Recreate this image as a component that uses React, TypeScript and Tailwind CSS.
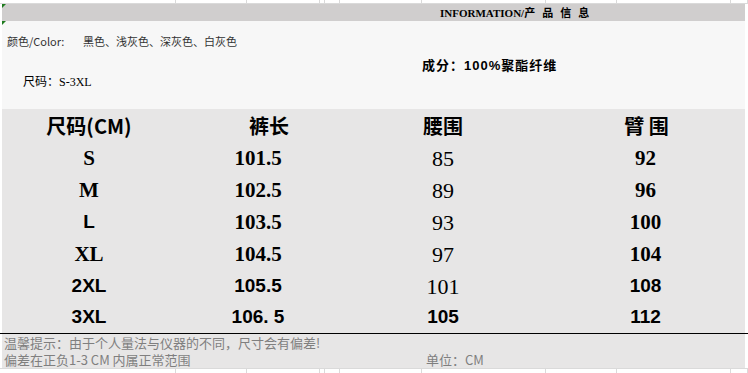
import React from "react";

const SERIF = "font-['Liberation_Serif',serif] font-bold text-[21px]";
const SERIF_REG = "font-['Liberation_Serif',serif] font-normal text-[22px]";
const SANS = "font-['Liberation_Sans',sans-serif] font-bold text-[19px]";
const CJK_HEAD = "font-['Noto_Sans_CJK_SC',sans-serif] font-bold text-[20px]";

// spreadsheet gridline ticks along the top and bottom edges
const GRID_CELLS = [176, 71, 73, 5, 15, 82, 124, 71, 114, 17];

const rows = [
  { size: ["S", SERIF], len: ["101.5", SERIF], waist: ["85", SERIF_REG], hip: ["92", SERIF] },
  { size: ["M", SERIF], len: ["102.5", SERIF], waist: ["89", SERIF_REG], hip: ["96", SERIF] },
  { size: ["L", SANS], len: ["103.5", SERIF], waist: ["93", SERIF_REG], hip: ["100", SERIF] },
  { size: ["XL", SERIF], len: ["104.5", SERIF], waist: ["97", SERIF_REG], hip: ["104", SERIF] },
  { size: ["2XL", SANS], len: ["105.5", SANS], waist: ["101", SERIF_REG], hip: ["108", SANS] },
  { size: ["3XL", SANS], len: ["106. 5", SANS], waist: ["105", SANS], hip: ["112", SANS] },
];

const GridStrip = ({ className }: { className: string }) => (
  <div className={`flex ${className}`}>
    {GRID_CELLS.map((w, i) => (
      <div
        key={i}
        style={{ width: w }}
        className="h-full shrink-0 border-r border-[#dadada]"
      />
    ))}
  </div>
);

const Corner = () => (
  <svg className="absolute left-0 top-0" width="4" height="4" viewBox="0 0 4 4">
    <polygon points="0,0 4,0 0,4" fill="#1e7b1e" />
  </svg>
);

const TABLE_COLS = "grid grid-cols-[174px_164px_206px_199px]";

export default function App() {
  return (
    <div className="w-[748px] h-[373px] bg-white overflow-hidden text-black">
      <GridStrip className="h-[4px] border-b border-[#dadada]" />

      {/* title bar */}
      <div className="relative ml-[2px] w-[743px] h-[17px] bg-[#d0cece] pl-[438px] text-[11px] leading-[17px] font-bold whitespace-pre">
        <Corner />
        <span className="font-['Liberation_Serif',serif]">INFORMATION/</span>
        <span className="font-['Noto_Sans_CJK_SC',sans-serif] tracking-[7px]">产品信息</span>
      </div>

      {/* info panel */}
      <div className="relative ml-[2px] w-[743px] h-[88px] bg-[#f7f7f7] flex">
        <Corner />
        <div className="w-[420px] pl-[5px] pt-[12px]">
          <div className="h-4 leading-4 text-[11px] text-[#333] font-['Noto_Sans_CJK_SC',sans-serif] whitespace-pre">
            <span className="inline-block w-[76px]">颜色/Color:</span>
            黑色、浅灰色、深灰色、白灰色
          </div>
          <div className="mt-[25px] pl-[16px] h-4 leading-4 text-[12px] font-['Liberation_Serif','Noto_Sans_CJK_SC',serif]">
            尺码：S-3XL
          </div>
        </div>
        <div className="pt-[37px] h-4 leading-4 text-[13px] font-bold tracking-[1px] font-['Liberation_Sans','Noto_Sans_CJK_SC',sans-serif]">
          成分：100%聚酯纤维
        </div>
      </div>

      {/* size table */}
      <div className="ml-[2px] w-[743px] h-[224px] bg-[#e7e6e6]">
        <div className={`${TABLE_COLS} h-[33px] items-center text-center`}>
          <div className={`${CJK_HEAD} whitespace-pre`}>尺码(CM)</div>
          <div className={`${CJK_HEAD} pl-[22px]`}>裤长</div>
          <div className={CJK_HEAD}>腰围</div>
          <div className={`${CJK_HEAD} whitespace-pre pl-[2px]`}>臂 围</div>
        </div>
        {rows.map((r, i) => (
          <div
            key={i}
            className={`${TABLE_COLS} ${i === rows.length - 1 ? "h-[31px]" : "h-8"} items-center text-center whitespace-pre`}
          >
            <div className={r.size[1]}>{r.size[0]}</div>
            <div className={r.len[1]}>{r.len[0]}</div>
            <div className={r.waist[1]}>{r.waist[0]}</div>
            <div className={r.hip[1]}>{r.hip[0]}</div>
          </div>
        ))}
      </div>

      <div className="h-px bg-black" />

      {/* footer notes */}
      <div className="ml-[2px] w-[743px] h-[34px] bg-[#e7e6e6] pl-[2px] text-[13px] leading-[17px] text-[#7f7f7f] font-['Noto_Sans_CJK_SC',sans-serif]">
        <div>温馨提示：由于个人量法与仪器的不同，尺寸会有偏差!</div>
        <div className="flex">
          <div className="w-[422px]">偏差在正负1-3 CM 内属正常范围</div>
          <div>单位：CM</div>
        </div>
      </div>

      <GridStrip className="h-[5px] border-t border-[#dadada]" />
    </div>
  );
}
